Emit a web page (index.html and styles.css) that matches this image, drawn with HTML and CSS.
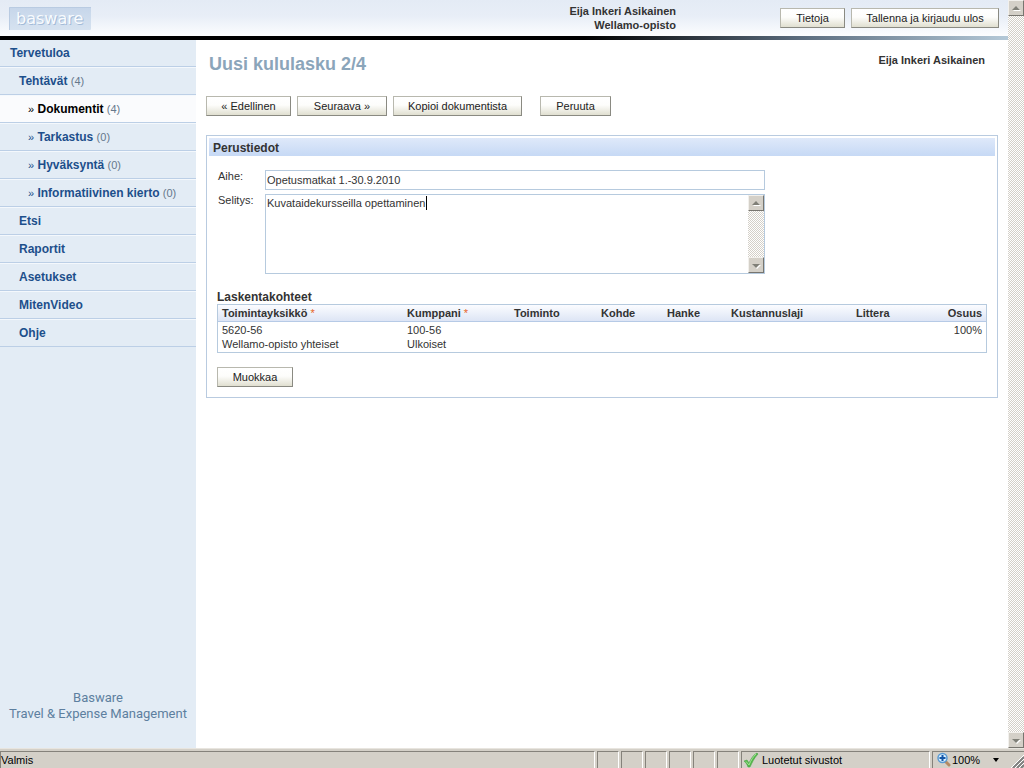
FILE: index.html
```html
<!DOCTYPE html>
<html lang="fi">
<head>
<meta charset="utf-8">
<title>Uusi kululasku 2/4</title>
<link rel="stylesheet" href="styles.css">
</head>
<body>
<div class="viewport">
  <div class="page">
    <header class="header">
      <svg class="logo" viewBox="0 0 82 23" role="img" aria-label="basware">
        <defs>
          <linearGradient id="logoFill" x1="0" y1="0" x2="0" y2="1">
            <stop offset="0" stop-color="#c6d6ea"/>
            <stop offset="1" stop-color="#d6e2f0"/>
          </linearGradient>
        </defs>
        <rect width="82" height="23" rx="1" fill="url(#logoFill)"/>
        <path d="M0.5 23V0.5H82" fill="none" stroke="#b9cbe2"/>
        <text class="logo-shade" x="8" y="18">basware</text>
        <text class="logo-text" x="7" y="17">basware</text>
      </svg>
      <div class="account">Eija Inkeri Asikainen<br>Wellamo-opisto</div>
      <div class="header-actions">
        <button class="btn w-info" type="button">Tietoja</button>
        <button class="btn w-save" type="button">Tallenna ja kirjaudu ulos</button>
      </div>
    </header>
    <div class="columns">
      <nav class="sidebar">
        <ul class="menu">
          <li><a class="item first" href="#">Tervetuloa</a></li>
          <li><a class="item level1" href="#">Tehtävät <span class="count">(4)</span></a></li>
          <li><a class="item level2 active" href="#"><span class="mark">»</span> Dokumentit <span class="count">(4)</span></a></li>
          <li><a class="item level2" href="#"><span class="mark">»</span> Tarkastus <span class="count">(0)</span></a></li>
          <li><a class="item level2" href="#"><span class="mark">»</span> Hyväksyntä <span class="count">(0)</span></a></li>
          <li><a class="item level2" href="#"><span class="mark">»</span> Informatiivinen kierto <span class="count">(0)</span></a></li>
          <li><a class="item level1" href="#">Etsi</a></li>
          <li><a class="item level1" href="#">Raportit</a></li>
          <li><a class="item level1" href="#">Asetukset</a></li>
          <li><a class="item level1" href="#">MitenVideo</a></li>
          <li><a class="item level1" href="#">Ohje</a></li>
        </ul>
        <div class="product">Basware<br>Travel &amp; Expense Management</div>
      </nav>
      <main class="content">
        <div class="title-row">
          <h1 class="title">Uusi kululasku 2/4</h1>
          <div class="owner">Eija Inkeri Asikainen</div>
        </div>
        <div class="toolbar">
          <button class="btn w-prev" type="button">« Edellinen</button>
          <button class="btn w-next" type="button">Seuraava »</button>
          <button class="btn w-copy" type="button">Kopioi dokumentista</button>
          <button class="btn w-cancel" type="button">Peruuta</button>
        </div>
        <section class="panel">
          <h2 class="panel-title">Perustiedot</h2>
          <div class="panel-body">
            <div class="field">
              <label class="label" for="subject">Aihe:</label>
              <input class="input" id="subject" type="text" value="Opetusmatkat 1.-30.9.2010">
            </div>
            <div class="field">
              <label class="label" for="description">Selitys:</label>
              <div class="textbox">
                <textarea class="textarea" id="description">Kuvataidekursseilla opettaminen</textarea>
                <span class="caret"></span>
                <div class="scrollbar">
                  <span class="scroll-btn"><svg class="arrow" viewBox="0 0 9 9"><path d="M1 7L5 3L9 7Z" fill="#fff"/><path d="M0 6L4 2L8 6Z" fill="#808078"/></svg></span>
                  <span class="scroll-btn"><svg class="arrow" viewBox="0 0 9 9"><path d="M1 4L5 8L9 4Z" fill="#fff"/><path d="M0 3L4 7L8 3Z" fill="#808078"/></svg></span>
                </div>
              </div>
            </div>
            <h3 class="subheading">Laskentakohteet</h3>
            <table class="table">
              <colgroup>
                <col class="col-unit"><col class="col-partner"><col class="col-function"><col class="col-target"><col class="col-project"><col class="col-cost"><col class="col-code"><col>
              </colgroup>
              <thead>
                <tr><th>Toimintayksikkö <span class="required">*</span></th><th>Kumppani <span class="required">*</span></th><th>Toiminto</th><th>Kohde</th><th>Hanke</th><th>Kustannuslaji</th><th>Littera</th><th class="right">Osuus</th></tr>
              </thead>
              <tbody>
                <tr><td>5620-56<br>Wellamo-opisto yhteiset</td><td>100-56<br>Ulkoiset</td><td></td><td></td><td></td><td></td><td></td><td class="right">100%</td></tr>
              </tbody>
            </table>
            <button class="btn w-edit" type="button">Muokkaa</button>
          </div>
        </section>
      </main>
    </div>
  </div>
  <div class="scrollbar">
    <span class="scroll-btn"><svg class="arrow" viewBox="0 0 9 9"><path d="M1 7L5 3L9 7Z" fill="#fff"/><path d="M0 6L4 2L8 6Z" fill="#808078"/></svg></span>
    <span class="scroll-btn"><svg class="arrow" viewBox="0 0 9 9"><path d="M1 4L5 8L9 4Z" fill="#fff"/><path d="M0 3L4 7L8 3Z" fill="#808078"/></svg></span>
  </div>
</div>
<footer class="status">
  <div class="pane message">Valmis</div>
  <div class="pane slot"></div>
  <div class="pane slot"></div>
  <div class="pane slot"></div>
  <div class="pane slot"></div>
  <div class="pane slot"></div>
  <div class="pane slot"></div>
  <div class="pane zone">
    <svg class="icon" viewBox="0 0 16 16"><path d="M1 9L4 8L6 11C8 7 10 3 14 1L15 2C11 6 9 11 7 15H5C4 12 3 11 1 9Z" fill="#52b848" stroke="#4aa548" stroke-width=".6"/><path d="M3 9.500L6 13C8 8 10 5 13 2" fill="none" stroke="#a4e298"/></svg>
    <span>Luotetut sivustot</span>
  </div>
  <div class="pane zoom">
    <svg class="icon" viewBox="0 0 16 16"><path d="M9 9L13 13" stroke="#b58a63" stroke-width="3" stroke-linecap="round"/><circle cx="6.500" cy="6" r="4.500" fill="#d8efff" stroke="#5a9ad2" stroke-width="1.500"/><path d="M6.500 3V9M3.500 6H9.500" stroke="#1457a8" stroke-width="2"/></svg>
    <span class="zoom-value">100%</span>
    <svg class="drop" viewBox="0 0 6 4"><path d="M0 0H6L3 4Z" fill="#000"/></svg>
    <svg class="grip" viewBox="0 0 13 13"><path d="M2 13L13 2M6 13L13 6M10 13L13 10" stroke="#808080" stroke-width="2"/><path d="M0 13L13 0M4 13L13 4M8 13L13 8" stroke="#fff"/></svg>
  </div>
</footer>
</body>
</html>
```
FILE: styles.css
```css
* { box-sizing: border-box; }

body {
  margin: 0;
  height: 100vh;
  display: flex;
  flex-direction: column;
  overflow: hidden;
  background: #fff;
  color: #333;
  font: 11px/14px "Liberation Sans", Arial, sans-serif;
}

h1, h2, h3, ul { margin: 0; padding: 0; }

.viewport { flex: 1; display: flex; min-height: 0; }
.page { flex: 1; display: flex; flex-direction: column; min-width: 0; }

.header {
  display: flex;
  align-items: flex-start;
  height: 40px;
  padding: 0 9px;
  background:
    linear-gradient(to right, #000 0, #000 58%, #5d6f81 80%, #b4c9d8 100%) bottom / 100% 4px no-repeat,
    linear-gradient(#e4ebf5, #e8eef7 40%, #fdfeff 92%);
}
.logo { width: 82px; height: 23px; margin-top: 7px; }
.logo-text, .logo-shade { font: 16px "DejaVu Sans", sans-serif; fill: #f8fbfe; }
.logo-shade { fill: #a3bbd8; }
.account {
  flex: 1;
  padding: 4px 104px 0 0;
  text-align: right;
  font-weight: bold;
}
.header-actions { display: flex; gap: 6px; padding-top: 8px; }

.btn {
  height: 20px;
  padding: 0;
  border: 1px solid #b8b8ae;
  border-right-color: #8a8a82;
  border-bottom-color: #8a8a82;
  background: linear-gradient(#fff, #fdfdfb 45%, #e0dfd0);
  color: #222;
  font: 11px/14px "Liberation Sans", Arial, sans-serif;
}
.w-info { width: 65px; }
.w-save { width: 148px; }
.w-prev { width: 85px; }
.w-next { width: 90px; }
.w-copy { width: 129px; }
.w-cancel { width: 71px; margin-left: 12px; }
.w-edit { width: 76px; margin-top: 14px; }

.columns { flex: 1; display: flex; min-height: 0; }

.sidebar {
  width: 196px;
  display: flex;
  flex-direction: column;
  justify-content: space-between;
  background: #e3ecf5;
}
.menu { list-style: none; }
.item {
  display: block;
  height: 28px;
  padding-top: 6px;
  border-top: 1px solid #f4f8fc;
  border-bottom: 1px solid #bccfe6;
  color: #1d4f8b;
  font-size: 12px;
  font-weight: bold;
  text-decoration: none;
}
.first { height: 27px; padding-left: 10px; border-top: 0; }
.level1 { padding-left: 19px; }
.level2 { padding-left: 28px; }
.active { background: #fafbfd; color: #000; }
.count { font-size: 11px; font-weight: normal; color: #66788c; }
.mark { font-size: 11px; font-weight: normal; }
.product {
  padding-bottom: 26px;
  color: #5d7f9f;
  font: 13px/16px Roboto, sans-serif;
  text-align: center;
  white-space: nowrap;
}

.content { flex: 1; min-width: 0; padding: 13px 10px 0; }
.title-row { display: flex; justify-content: space-between; padding: 0 13px 0 3px; }
.title { color: #8ba5ba; font-size: 18px; line-height: 22px; }
.owner { font-weight: bold; }
.toolbar { display: flex; gap: 6px; margin-top: 21px; }

.panel { margin-top: 19px; padding: 2px; border: 1px solid #b9cbe0; }
.panel-title {
  height: 18px;
  padding: 2px 4px;
  background: linear-gradient(#dfe9fa, #c6d9f5);
  font-size: 12px;
  line-height: 16px;
}
.panel-body { padding: 14px 8px 8px; }
.field { display: flex; align-items: flex-start; margin-bottom: 4px; }
.label { width: 48px; padding-left: 1px; line-height: 12px; }
.input {
  width: 500px;
  height: 20px;
  padding: 0 1px;
  border: 1px solid #b6cade;
  color: #333;
  font: inherit;
}
.textbox {
  position: relative;
  display: flex;
  width: 500px;
  height: 80px;
  border: 1px solid #b6cade;
}
.textarea {
  flex: 1;
  padding: 1px;
  border: 0;
  outline: 0;
  resize: none;
  overflow: hidden;
  color: #333;
  font: inherit;
}
.caret { position: absolute; left: 160px; top: 1px; width: 1px; height: 14px; background: #000; }

.scrollbar {
  width: 16px;
  display: flex;
  flex-direction: column;
  justify-content: space-between;
  background: repeating-conic-gradient(#d4d0c8 0 25%, #fff 0 50%) 0 0 / 2px 2px;
}
.scroll-btn {
  display: flex;
  align-items: center;
  justify-content: center;
  height: 16px;
  border: 1px solid #f2f0ec;
  border-right-color: #77756f;
  border-bottom-color: #77756f;
  background: #d4d0c8;
}
.arrow { width: 9px; height: 9px; }

.subheading { margin-top: 16px; font-size: 12px; line-height: 14px; }
.table {
  width: 100%;
  table-layout: fixed;
  border-collapse: separate;
  border-spacing: 0;
  border: 1px solid #b6cade;
}
.table th {
  padding: 1px 4px;
  border-bottom: 1px solid #b6cae6;
  background: linear-gradient(#fbfcff, #dde5f5);
  text-align: left;
  white-space: nowrap;
}
.table td { padding: 1px 4px; vertical-align: top; }
.table .right { text-align: right; }
.col-unit { width: 185px; }
.col-partner { width: 107px; }
.col-function { width: 87px; }
.col-target { width: 66px; }
.col-project { width: 64px; }
.col-cost { width: 125px; }
.col-code { width: 70px; }
.required { color: #e8641e; font-weight: normal; }

.status {
  display: flex;
  gap: 2px;
  height: 20px;
  padding-top: 2px;
  background: #d4d0c8;
  color: #000;
  line-height: 18px;
  border-top: 1px solid #e8e5df;
}
.pane {
  display: flex;
  align-items: center;
  border: 1px solid #85827b;
  border-right-color: #fff;
  border-bottom: 0;
}
.message { flex: 1; }
.slot { width: 22px; }
.zone { width: 189px; gap: 3px; padding-left: 1px; }
.zoom { position: relative; width: 92px; padding-left: 3px; border-right: 0; }
.icon { width: 16px; height: 16px; }
.zoom-value { flex: 1; }
.drop { width: 6px; height: 4px; margin-right: 25px; }
.grip { position: absolute; right: 0; bottom: 0; width: 13px; height: 13px; }
```
